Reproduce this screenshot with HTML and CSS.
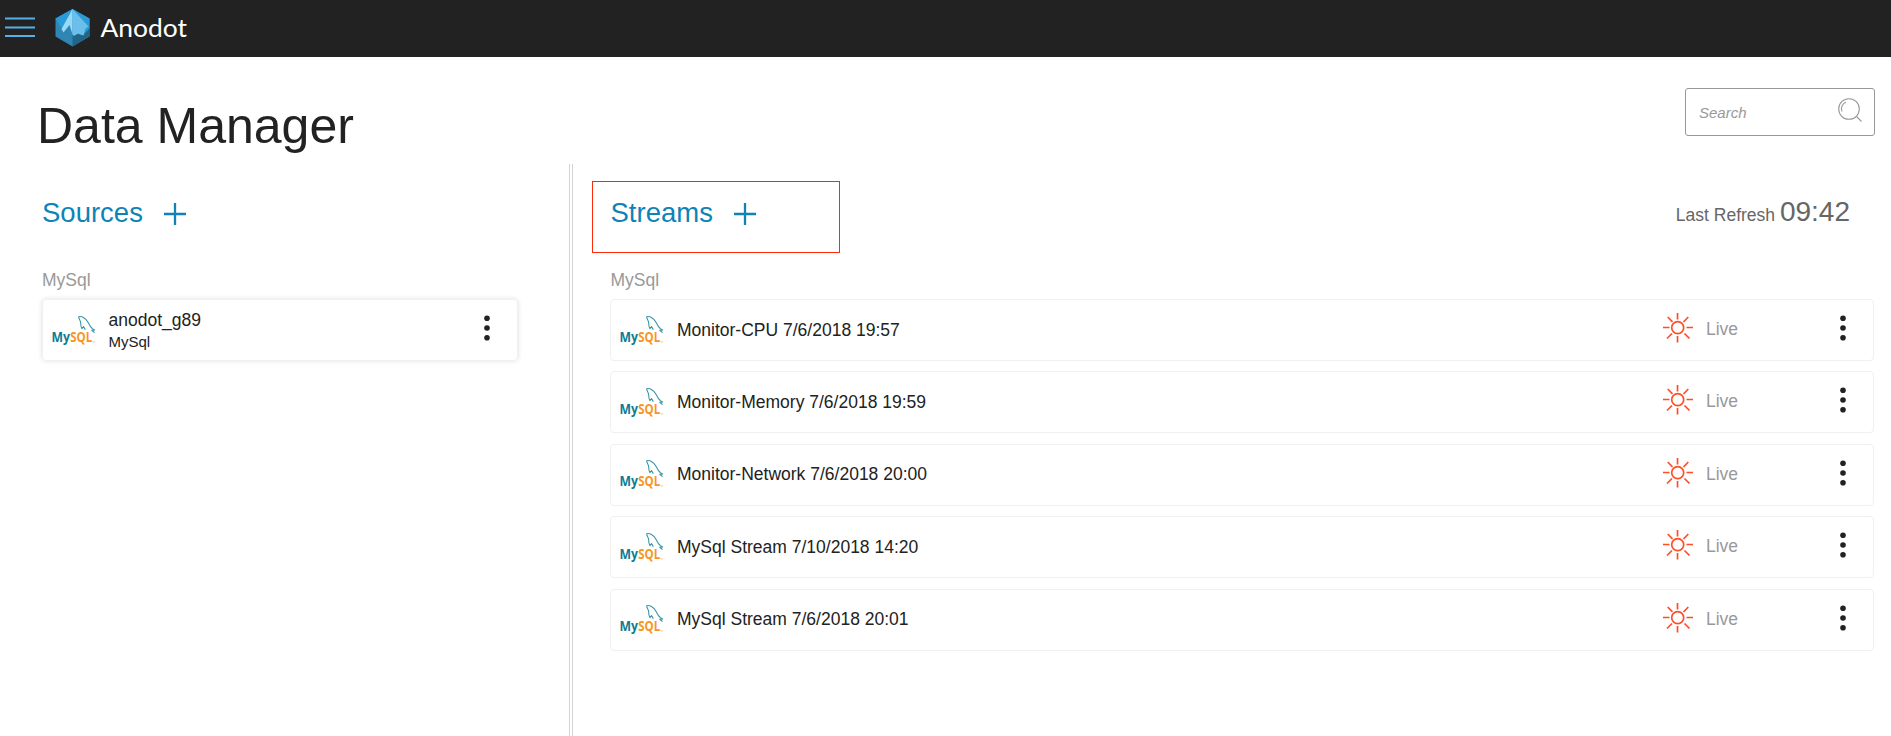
FILE: index.html
```html
<!DOCTYPE html>
<html lang="en">
<head>
<meta charset="utf-8">
<title>Data Manager</title>
<link rel="stylesheet" href="styles.css">
</head>
<body>
<svg class="defs" aria-hidden="true">
  <defs>
  <symbol id="mysql" viewBox="0 0 46 32">
    <path d="M27.500 1.700C31 .7 35 3.500 36.800 7c1.400 2.800 2.500 5 4.700 6.800l2.200 1.200-3 .2 2.800 2.300M27.500 1.700c.6 2.800 2.300 4 2.200 6.500-.1 2.200.2 3.900 1.300 5.400l1.500-2.100 1.800 3.100" fill="none" stroke="#3b96a8" stroke-width="1.100" stroke-linejoin="round"/>
    <text x="0.500" y="27.300" class="logo-my" textLength="18.500" lengthAdjust="spacingAndGlyphs">My</text>
    <text x="19.200" y="27.300" class="logo-sql" textLength="22" lengthAdjust="spacingAndGlyphs">SQL</text>
    <path d="M41.500 26.800H44" stroke="#f9c583" stroke-width="1"/>
  </symbol>
  <symbol id="sun" viewBox="0 0 30 30">
    <g fill="none" stroke="#ff4e27" stroke-width="1.700">
      <circle cx="14.700" cy="14.700" r="6"/>
      <path d="M14.500 0v6.500M14.500 23v6.500M0 14.500h6.500M23.500 14.500H30M4.700 4l4.800 4.800M20.500 9l4.800-5M9 20.500l-5 5M21.500 20.500l5 5"/>
    </g>
  </symbol>
  <symbol id="dots" viewBox="0 0 6 26">
    <g fill="#222"><circle cx="3" cy="3.300" r="2.800"/><circle cx="3" cy="13" r="2.800"/><circle cx="3" cy="22.700" r="2.800"/></g>
  </symbol>
  <symbol id="plus" viewBox="0 0 22 22">
    <path d="M11 0v22M0 11h22" stroke="#0f83b5" stroke-width="2.300"/>
  </symbol>
  </defs>
</svg>
<header class="topbar">
  <svg class="menu" viewBox="0 0 30 20"><path d="M0 1.500h30M0 10.500h30M0 19h30" stroke="#55b0ea" stroke-width="1.800"/></svg>
  <svg class="brand" viewBox="0 0 134 38">
    <path d="M17.500 0 34.500 9.500v18L17.500 37.500.5 27.500v-18z" fill="#2f86b4"/>
    <path d="M17.500 0 34.500 9.500v10L29 24 17.500 14 7 20 .5 9.500z" fill="#2a9bd6"/>
    <path d="M17.500 25.500 22 25l6 1.500 6.500-7v8l-17 10z" fill="#226587"/>
    <path d="M17.500 0 6.500 20l2 3.500 6-7.500 3 9.500z" fill="#98d9f8"/>
    <path d="M17.500 0v25.500l1.500 1.500 4-2.500 5.500 2 2-7 3-2z" fill="#6bbfea"/>
    <text x="45.500" y="28" class="brand-name" textLength="86.500" lengthAdjust="spacingAndGlyphs">Anodot</text>
  </svg>
</header>
<div class="title-row">
  <h1>Data Manager</h1>
  <label class="search">
    <span>Search</span>
    <svg viewBox="0 0 24 24"><g fill="none" stroke="#999" stroke-width="1.100"><circle cx="11" cy="11" r="10.300"/><path d="M18.500 18.500l5 5M4 13.500a7.300 7.300 0 0 1 4-9.500"/></g></svg>
  </label>
</div>
<main>
  <section class="sources">
    <div class="heading"><h2>Sources</h2><svg class="plus"><use href="#plus"/></svg></div>
    <p class="group">MySql</p>
    <div class="card raised">
      <svg class="logo"><use href="#mysql"/></svg>
      <div class="source-text"><span class="name">anodot_g89</span><span class="type">MySql</span></div>
      <svg class="dots"><use href="#dots"/></svg>
    </div>
  </section>
  <div class="divider"></div>
  <section class="streams">
    <div class="heading-row">
      <div class="heading highlighted"><h2>Streams</h2><svg class="plus"><use href="#plus"/></svg></div>
      <div class="refresh"><span>Last Refresh</span> <b>09:42</b></div>
    </div>
    <p class="group">MySql</p>
    <div class="list">
      <div class="card"><svg class="logo"><use href="#mysql"/></svg><span class="name">Monitor-CPU 7/6/2018 19:57</span><svg class="sun"><use href="#sun"/></svg><span class="status">Live</span><svg class="dots"><use href="#dots"/></svg></div>
      <div class="card"><svg class="logo"><use href="#mysql"/></svg><span class="name">Monitor-Memory 7/6/2018 19:59</span><svg class="sun"><use href="#sun"/></svg><span class="status">Live</span><svg class="dots"><use href="#dots"/></svg></div>
      <div class="card"><svg class="logo"><use href="#mysql"/></svg><span class="name">Monitor-Network 7/6/2018 20:00</span><svg class="sun"><use href="#sun"/></svg><span class="status">Live</span><svg class="dots"><use href="#dots"/></svg></div>
      <div class="card"><svg class="logo"><use href="#mysql"/></svg><span class="name">MySql Stream 7/10/2018 14:20</span><svg class="sun"><use href="#sun"/></svg><span class="status">Live</span><svg class="dots"><use href="#dots"/></svg></div>
      <div class="card"><svg class="logo"><use href="#mysql"/></svg><span class="name">MySql Stream 7/6/2018 20:01</span><svg class="sun"><use href="#sun"/></svg><span class="status">Live</span><svg class="dots"><use href="#dots"/></svg></div>
    </div>
  </section>
</main>
</body>
</html>
```
FILE: styles.css
```css
* { box-sizing: border-box; }
body {
  margin: 0;
  height: 736px;
  display: flex;
  flex-direction: column;
  overflow: hidden;
  background: #fff;
  color: #222;
  font-family: "Liberation Sans", Arial, sans-serif;
  font-size: 17.5px;
}
svg { display: block; flex: none; }
h1, h2, p { margin: 0; font-weight: 400; }
.defs { position: absolute; width: 0; height: 0; overflow: visible; }

.topbar {
  flex: none;
  height: 57px;
  padding-left: 5px;
  display: flex;
  align-items: flex-start;
  background: #222;
}
.menu { width: 30px; height: 20px; margin-top: 17px; }
.brand { width: 134px; height: 38px; margin: 9px 0 0 20px; }
.brand-name { font: 400 25px Lato, sans-serif; fill: #fff; }

.title-row {
  flex: none;
  height: 107px;
  padding: 31px 16px 0 37px;
  display: flex;
  justify-content: space-between;
  align-items: flex-start;
}
h1 { font-size: 50px; line-height: 58px; margin-top: 9px; }
.search {
  width: 190px;
  height: 48px;
  padding: 0 12px 0 13px;
  display: flex;
  justify-content: space-between;
  align-items: center;
  border: 1px solid #999;
  border-radius: 3px;
  color: #999;
  font-size: 15px;
  font-style: italic;
}
.search svg { width: 24px; height: 24px; margin-bottom: 4px; }

main { flex: 1; min-height: 0; display: flex; }
.sources { width: 569px; padding: 17px 51px 0 42px; }
.divider { width: 4px; border: solid #d4d4d4; border-width: 0 1px; }
.streams { flex: 1; padding: 17px 17px 0 19px; }
.heading { height: 72px; display: flex; align-items: flex-start; }
.heading h2 { width: 102px; color: #0f83b5; font-size: 27.5px; line-height: 32px; margin-top: 16px; }
.plus { width: 22px; height: 22px; margin: 22px 0 0 19.5px; }
.heading-row { display: flex; justify-content: space-between; }
.highlighted { width: 248px; border: 1px solid #fb2a08; padding-left: 17.5px; }
.highlighted h2 { margin-top: 15px; width: 104px; }
.highlighted .plus { margin-top: 21px; }
.refresh { color: #666; padding-right: 24px; line-height: 32px; margin-top: 15px; white-space: nowrap; }
.refresh b { font-size: 28px; font-weight: 400; }
.group { height: 46px; padding-top: 17px; line-height: 20px; color: #999; }
.streams .group { margin-left: 18.5px; }
.list { margin-left: 18px; display: flex; flex-direction: column; gap: 10.4px; }
.card {
  height: 62px;
  padding: 0 27px 0 8px;
  display: flex;
  align-items: center;
  border: 1px solid #f0f0f0;
  border-radius: 4px;
}
.raised { width: 476px; padding-right: 27px; box-shadow: 0 0 5px rgba(0, 0, 0, .12); }
.logo { width: 46px; height: 32px; margin-top: 1px; }
.logo-my, .logo-sql { font: 700 14px "Open Sans", sans-serif; }
.logo-my { fill: #0f7c94; }
.logo-sql { fill: #f7961e; }
.card .name { margin: 0 0 1px 12px; flex: 1; line-height: 20px; }
.source-text { flex: 1; display: flex; flex-direction: column; margin: 2px 0 0 11.5px; }
.source-text .name { margin: 0; line-height: 22px; }
.type { font-size: 15px; line-height: 22px; }
.sun { width: 30px; height: 30px; margin-bottom: 4px; }
.status { width: 147px; padding-left: 13px; margin-bottom: 1px; color: #999; }
.dots { width: 6px; height: 26px; margin-bottom: 4px; }
```
